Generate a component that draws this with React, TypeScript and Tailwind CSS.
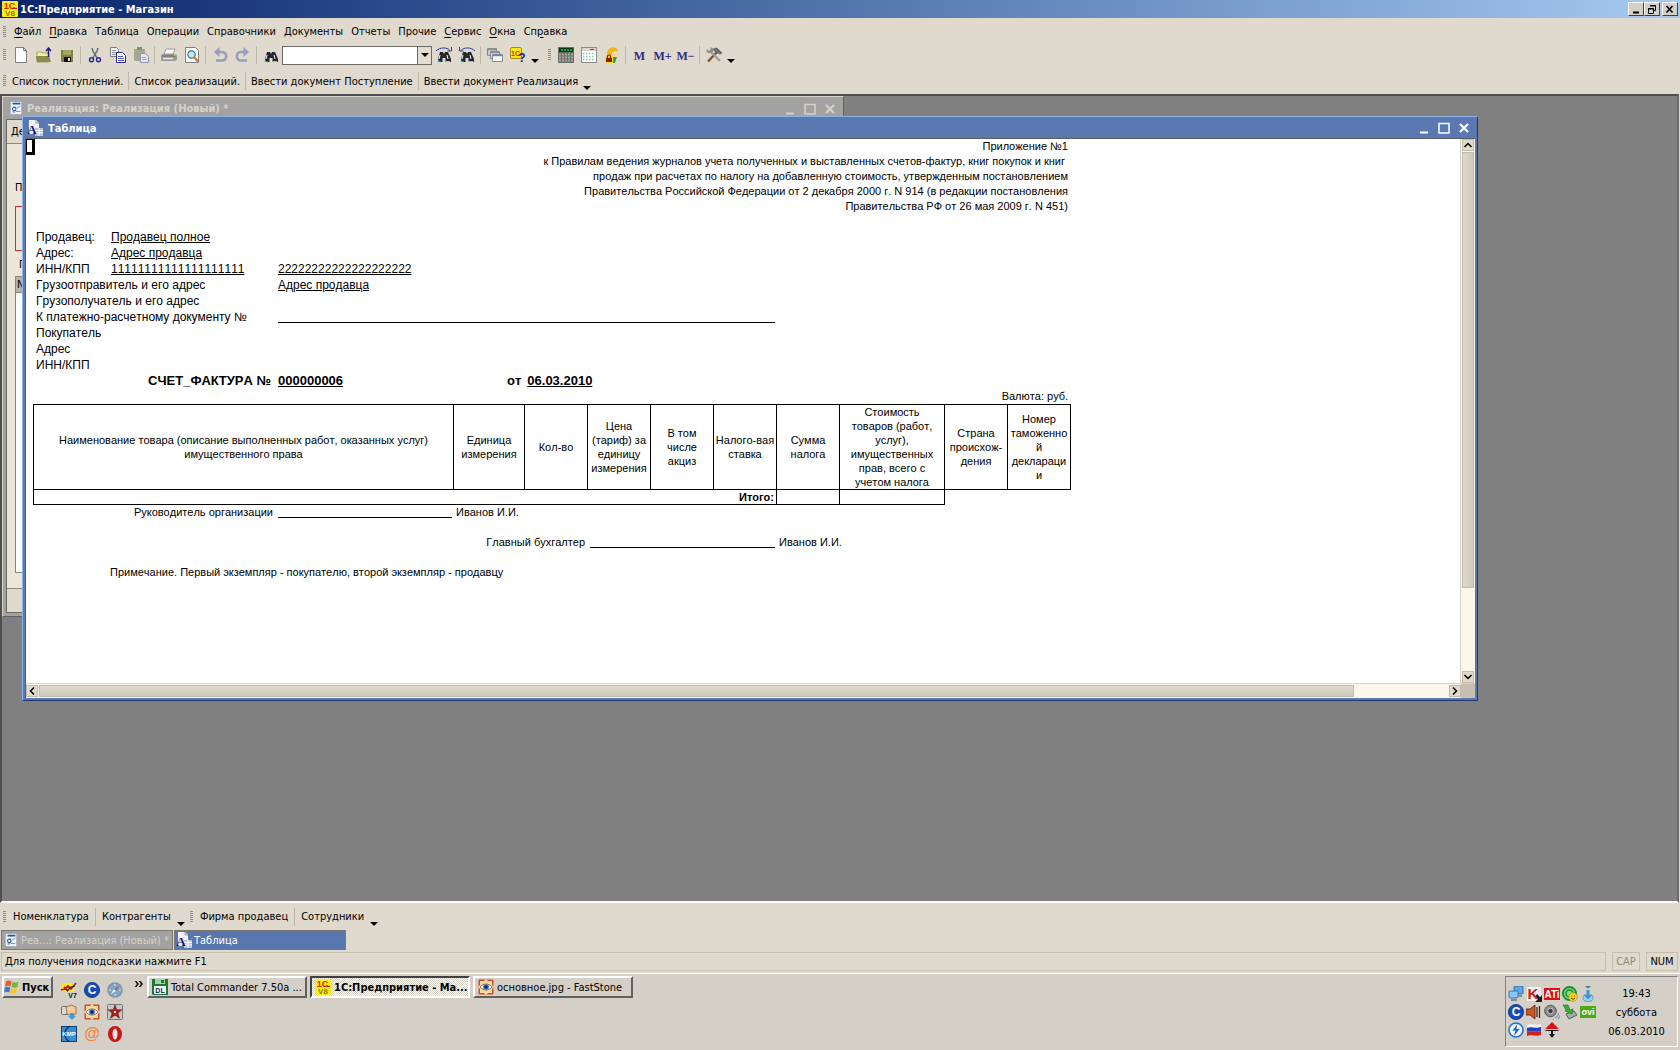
import type { ReactNode } from "react";

type Kids = { children?: ReactNode };

/* ---------- icons ---------- */

function Svg({ children }: Kids) {
  return (
    <svg viewBox="0 0 16 16" className="h-4 w-4 shrink-0" aria-hidden="true">
      {children}
    </svg>
  );
}

const glyphSans = "'Liberation Sans', Arial, sans-serif";
const glyphSerif = "'Liberation Serif', serif";

function Mark({ x, y, size, fill, serif, children }: Kids & { x: number; y: number; size: number; fill: string; serif?: boolean }) {
  return (
    <text x={x} y={y} fontSize={size} fontWeight="bold" textAnchor="middle" fill={fill} fontFamily={serif ? glyphSerif : glyphSans}>
      {children}
    </text>
  );
}

const Logo1C = () => (
  <Svg>
    <rect width="16" height="16" rx="1" fill="#ffee10" />
    <Mark x={7.5} y={8} size={9} fill="#d8200c">1С</Mark>
    <path d="M9 7.400h6" stroke="#d8200c" strokeWidth="1.200" />
    <Mark x={8} y={15.3} size={8} fill="#8a7a00">V8</Mark>
  </Svg>
);
const NewIcon = () => (
  <Svg>
    <path d="M2.5.5h8l3 3v12h-11z" fill="#fff" stroke="#808080" />
    <path d="M10.5.5v3h3" fill="none" stroke="#808080" />
  </Svg>
);
const OpenIcon = () => (
  <Svg>
    <path d="M1 5h5l1 1h6v9H1z" fill="#f4f0a8" stroke="#a8a460" />
    <path d="M0 9h13l2 6H1z" fill="#8c8c4a" />
    <path d="M12.5 10V2M10 4l2.500-3L15 4" fill="none" stroke="#20207c" strokeWidth="1.500" />
  </Svg>
);
const SaveIcon = () => (
  <Svg>
    <path d="M2 3h12v12H3l-1-1z" fill="#7f7f3e" />
    <path d="M4 3h8v5H4z" fill="#a4a464" />
    <path d="M5 10h7v5H5z" fill="#111" />
    <path d="M9 11h2v3H9z" fill="#ddd" />
  </Svg>
);
const CutIcon = () => (
  <Svg>
    <path d="M5 1l1 3 4 7M11 1l-1 3-4 7" fill="none" stroke="#666c74" strokeWidth="1.500" />
    <circle cx="4.500" cy="12.800" r="2" fill="none" stroke="#28288c" strokeWidth="1.400" />
    <circle cx="11.500" cy="12.800" r="2" fill="none" stroke="#28288c" strokeWidth="1.400" />
  </Svg>
);
const CopyIcon = () => (
  <Svg>
    <path d="M.5.5h6l2 2v7h-8z" fill="#eef" stroke="#808080" />
    <path d="M2 3.500h4M2 5.500h5M2 7.500h5" stroke="#909090" />
    <path d="M6.500 5.500h6l3 3v7h-9z" fill="#fff" stroke="#28288c" />
    <path d="M8 9.500h5M8 11.500h6M8 13.500h6" stroke="#5050a0" />
  </Svg>
);
const PasteIcon = () => (
  <Svg>
    <rect x="1" y="2" width="11" height="12" rx="1" fill="#a6a68c" />
    <rect x="4" y="0" width="5" height="3" fill="#8a8a80" />
    <path d="M7.500 6.500h5l3 3v6h-8z" fill="#e8e8ec" stroke="#9090a8" />
    <path d="M9 10.500h4M9 12.500h5" stroke="#a0a0b4" />
  </Svg>
);
const PrintIcon = () => (
  <Svg>
    <path d="M5 2h9l-2 5H3z" fill="#fafafa" stroke="#999" />
    <path d="M1 7h14l1 2v4l-2 1H1l-1-1V9z" fill="#9a9a98" />
    <path d="M1 9h14" stroke="#666" />
    <path d="M2 11.500h10" stroke="#e8e8e8" strokeWidth="1.500" />
    <path d="M13 8h2" stroke="#dd3" />
  </Svg>
);
const PreviewIcon = () => (
  <Svg>
    <path d="M1.500.5h10l3 3v12h-13z" fill="#fff" stroke="#808080" />
    <circle cx="7.500" cy="7.500" r="3.700" fill="#b8ecf4" stroke="#506878" strokeWidth="1.200" />
    <path d="M10 10l4 4.500" stroke="#c07820" strokeWidth="2" />
  </Svg>
);
const UndoIcon = () => (
  <Svg>
    <path d="M6 5h4a3.500 3.500 0 0 1 0 8.500H4" fill="none" stroke="#9c9cb8" strokeWidth="2.600" />
    <path d="M7.500 0v10L2 5z" fill="#9c9cb8" />
  </Svg>
);
const RedoIcon = () => (
  <Svg>
    <path d="M10 5H6a3.500 3.500 0 0 0 0 8.500H12" fill="none" stroke="#9c9cb8" strokeWidth="2.600" />
    <path d="M8.500 0v10L14 5z" fill="#9c9cb8" />
  </Svg>
);
const Bino = () => (
  <>
    <path d="M4 5h3l1 2 1-2h3l3 7v3H9.500v-4h-3v4H2v-3z" fill="#24282c" />
    <path d="M4 8l-1 4M11 8l1 4" stroke="#fff" />
    <path d="M2 13v2h3M9.500 14.500H14" stroke="#7fd8d8" fill="none" />
  </>
);
const FindIcon = () => <Svg><Bino /></Svg>;
const FindNextIcon = () => (
  <Svg>
    <Bino />
    <path d="M0 4C4 0 11 0 14 3.500M15.500 0v4h-4" fill="none" stroke="#34349c" />
  </Svg>
);
const FindPrevIcon = () => (
  <Svg>
    <Bino />
    <path d="M16 4C12 0 5 0 2 3.500M.5 0v4h4" fill="none" stroke="#34349c" />
  </Svg>
);
const WindowsIcon = () => (
  <Svg>
    <path d="M.5 1.500h9v7h-9z" fill="#ccc" stroke="#888" />
    <path d="M3.500 4.500h9v7h-9z" fill="#ddd" stroke="#888" />
    <path d="M5.500 7.500h10v7h-10z" fill="#f8fcff" stroke="#808890" />
    <path d="M1 2.500h8M4 5.500h8" stroke="#909498" strokeWidth="1.500" />
    <path d="M6 8.500h9" stroke="#6d8da8" strokeWidth="1.500" />
  </Svg>
);
const HelpIcon = () => (
  <Svg>
    <rect x=".5" y=".5" width="11" height="11" rx="1.500" fill="#ffe818" stroke="#a88c10" />
    <Mark x={5.500} y={8.500} size={7} fill="#cc3010">1С</Mark>
    <Mark x={12} y={15} size={12} fill="#20207c">?</Mark>
  </Svg>
);
const CalcIcon = () => (
  <Svg>
    <rect x="0" y="0" width="16" height="16" fill="#6c6c68" />
    <rect x="1" y="1" width="14" height="4" fill="#083c18" />
    <path d="M3 3h11" stroke="#20c850" strokeWidth="1.500" strokeDasharray="2 1" />
    <path d="M1 7.500h14M1 10.500h14M1 13.500h14" stroke="#a8a8a0" strokeWidth="2" strokeDasharray="2 1" />
  </Svg>
);
const CalendarIcon = () => (
  <Svg>
    <rect x=".5" y=".5" width="15" height="15" fill="#fff" stroke="#8c8c88" />
    <path d="M1 2.500h14" stroke="#d8d4cc" strokeWidth="3" />
    <path d="M9 2.500h4" stroke="#d03020" />
    <path d="M2 6.500h12M2 9.500h12M2 12.500h12" stroke="#84c8b8" strokeWidth="1.500" strokeDasharray="1.500 1.500" />
  </Svg>
);
const UserIcon = () => (
  <Svg>
    <path d="M3 8C2-1 13-2 14 4l-2 1-4 4z" fill="#f4b41c" />
    <path d="M8 5l4-1 2 3-1 3H8z" fill="#f8d8a4" />
    <path d="M9 10h4l-2 6H8z" fill="#3c9c58" />
    <rect x="1" y="8" width="8" height="8" fill="#f8dc28" />
    <path d="M2 11h6v4H2z" fill="#8c1c10" />
    <path d="M3.500 11V9.500a1.500 1.500 0 0 1 3 0V11" fill="none" stroke="#8c1c10" strokeWidth="1.200" />
  </Svg>
);
const ToolsIcon = () => (
  <Svg>
    <path d="M2 14.500 11 5" stroke="#8c4c28" strokeWidth="2.400" />
    <path d="M7 2l4-1 5 5-2 1-2-1-2 0z" fill="#70706c" stroke="#484844" strokeWidth=".6" />
    <path d="M4.500 4.500 14 14" stroke="#a0a09c" strokeWidth="2.400" />
    <path d="M1 2l2 2 2-2-1-1.500c3 0 4 2 3 4S2 7 .5 4.500z" fill="#8c8c88" />
  </Svg>
);
const FormIcon = () => (
  <svg viewBox="0 0 16 16" className="h-[14px] w-[14px] shrink-0" aria-hidden="true">
    <path d="M2 1h12v14H2z" fill="#eef4fc" />
    <path d="M4 3h9" stroke="#1c58a8" strokeWidth="2" />
    <circle cx="6" cy="9" r="2" fill="none" stroke="#28609c" strokeWidth="1.200" />
    <path d="M9 8l4-2M8 12h5" stroke="#6090c0" />
    <path d="M4 12.500h3" stroke="#28609c" />
  </svg>
);
const SheetIcon = () => (
  <Svg>
    <path d="M2 0h7l3 3v11H2z" fill="#f2f2fa" />
    <path d="M9 0v3h3" fill="none" stroke="#99a" />
    <path d="M8 8h8v8H8z" fill="#bcc4d0" />
    <path d="M8 10.500h8M8 13h8M12 8v8" stroke="#fff" />
    <Mark x={5} y={14} size={13} fill="#14147c" serif>A</Mark>
  </Svg>
);
const WindowsFlag = () => (
  <Svg>
    <path d="M2 2.500C4 1 5.500 1.500 7.500 2.500L6.500 7.500C4.500 6.500 3 6.500 1 7.800z" fill="#f0582c" />
    <path d="M8.500 3c2 1 3.500 1 6-.2L13.300 8c-2 1-3.800 1-5.800 0z" fill="#70b83c" />
    <path d="M.8 8.800c2-1.300 3.500-1.200 5.500-.2L5.300 13.500c-2-1-3.500-1-5.300.2z" fill="#3c78d8" />
    <path d="M7.300 9c2 1 3.800 1 5.800 0l-1.200 5c-2 1-3.800 1-5.800 0z" fill="#f8c820" />
  </Svg>
);
const V7Icon = () => (
  <Svg>
    <path d="M1 1l13 0-1 9H0z" fill="#ffe818" />
    <path d="M0 8l4-1 3-3 3 3 5-6M3 5l4 4" fill="none" stroke="#c01818" strokeWidth="1.800" />
    <path d="M6 9l4-4 4-1" fill="none" stroke="#20207c" strokeWidth="1.200" />
    <Mark x={11.500} y={15.500} size={7} fill="#111">V7</Mark>
  </Svg>
);
const BlueC = () => (
  <Svg>
    <circle cx="8" cy="8" r="7.600" fill="#184cb4" stroke="#0c2c7c" strokeWidth=".8" />
    <Mark x={8} y={12.300} size={12} fill="#fff">C</Mark>
  </Svg>
);
const SafariIcon = () => (
  <Svg>
    <circle cx="8" cy="8" r="7" fill="#78a8d0" stroke="#8c9298" strokeWidth="1.600" />
    <path d="M8 2v2M8 12v2M2 8h2M12 8h2" stroke="#dfeefa" />
    <path d="M12 4 9 9 7 7z" fill="#c05048" />
    <path d="M4 12l3-5 2 2z" fill="#f4f8fc" />
  </Svg>
);
const HandIcon = () => (
  <Svg>
    <rect x=".5" y="2.500" width="7" height="8" rx="1" fill="#d8dcd0" stroke="#607078" />
    <path d="M5 3l5-2 5 2v7l-4 2-5-2z" fill="#f4c898" stroke="#8c6040" strokeWidth=".8" />
    <path d="M9 9h4v3h2l-4 4-4-4h2z" fill="#38a0e0" />
  </Svg>
);
const EyeIcon = () => (
  <Svg>
    <rect x=".5" y=".5" width="15" height="15" rx="1" fill="#d04c24" />
    <path d="M8 0l2 2h4v4l2 2-2 2v4h-4l-2 2-2-2H2v-4L0 8l2-2V2h4z" fill="#f4d8a8" />
    <path d="M2 8c3-4 9-4 12 0-3 4-9 4-12 0z" fill="#e8f0f8" stroke="#8c5430" strokeWidth=".8" />
    <circle cx="8" cy="8" r="2.800" fill="#2c68b0" />
    <circle cx="8" cy="8" r="1.300" fill="#081c40" />
  </Svg>
);
const StarIcon = () => (
  <Svg>
    <rect x=".5" y=".5" width="15" height="15" rx="1" fill="#c8c8c4" stroke="#787874" />
    <path d="M8 1l1.800 4.800H15l-4 3.200 1.500 5.200L8 11.200 3.500 14.200 5 9 1 5.800h5.200z" fill="#a81c1c" stroke="#681010" strokeWidth=".5" />
    <circle cx="8" cy="8" r="1.300" fill="#e8d8d0" />
  </Svg>
);
const KmpIcon = () => (
  <Svg>
    <rect x=".5" y=".5" width="15" height="15" fill="#3c8cd0" stroke="#103c70" />
    <path d="M9 0C2 4 2 12 9 16" fill="none" stroke="#0c2c58" strokeWidth="1.300" />
    <Mark x={8} y={10} size={6} fill="#fff">KMP</Mark>
  </Svg>
);
const AtIcon = () => (
  <Svg>
    <Mark x={8} y={13} size={16} fill="#f08838">@</Mark>
  </Svg>
);
const OperaIcon = () => (
  <Svg>
    <ellipse cx="8" cy="8" rx="7" ry="8" fill="#cc1418" />
    <ellipse cx="8" cy="8" rx="2.500" ry="5.500" fill="#e8e4e0" />
  </Svg>
);
const FloppyIcon = () => (
  <Svg>
    <path d="M0 0h16v16H1l-1-1z" fill="#187c30" />
    <path d="M3 0h10v5H3z" fill="#a4d0a8" />
    <path d="M9 1h3v3H9z" fill="#187c30" />
    <path d="M2 7h12v8H2z" fill="#f4f4f4" />
    <Mark x={8} y={13.500} size={7} fill="#202860">DL</Mark>
  </Svg>
);
const NetIcon = () => (
  <Svg>
    <rect x="6" y="0" width="9" height="8" rx="1" fill="#58a8ec" stroke="#2c5c9c" strokeWidth=".8" />
    <rect x="1" y="5" width="9" height="7" rx="1" fill="#88c8f8" stroke="#2c5c9c" strokeWidth=".8" />
    <path d="M3 14h6M10 10h4" stroke="#7c90a4" strokeWidth="1.800" />
  </Svg>
);
const KasperIcon = () => (
  <Svg>
    <rect x="1" y="1" width="14" height="14" fill="#f4f0ec" />
    <Mark x={7} y={13} size={15} fill="#d01c18">K</Mark>
    <path d="M9 16h7V9l-2 2-3-3-1.500 2 2.500 3z" fill="#181c24" />
  </Svg>
);
const AtiIcon = () => (
  <Svg>
    <rect y="2" width="16" height="12" fill="#dc1010" />
    <Mark x={8} y={12} size={10} fill="#fff">ATi</Mark>
  </Svg>
);
const SmileIcon = () => (
  <Svg>
    <circle cx="7.500" cy="7.500" r="6.500" fill="#8cdc78" stroke="#18902c" strokeWidth="2" />
    <circle cx="7.500" cy="7.500" r="3.500" fill="none" stroke="#18902c" strokeWidth="1.500" />
    <circle cx="11" cy="11" r="4.300" fill="#fcd428" stroke="#b88c10" strokeWidth=".7" />
    <path d="M9 12c1 1.500 3 1.500 4 0M9.500 10h.8M12 10h.8" fill="none" stroke="#604008" />
  </Svg>
);
const DownloadIcon = () => (
  <Svg>
    <path d="M5 0h6L9 2H7z" fill="#58788c" />
    <path d="M4 9c-2 4-1 6.500 4 6.500s6-2.500 4-6.500z" fill="#9cd4f0" stroke="#4890b8" strokeWidth=".8" />
    <path d="M6.500 4h3v5h3L8 13.500 3.500 9h3z" fill="#3898d8" />
  </Svg>
);
const HornIcon = () => (
  <Svg>
    <path d="M0 5h4l5-4v14l-5-4H0z" fill="#c85828" stroke="#501c08" strokeWidth=".8" />
    <path d="M11 3v10M13.500 2v12" fill="none" stroke="#401408" strokeWidth="1.200" />
  </Svg>
);
const SpeakerIcon = () => (
  <Svg>
    <circle cx="6.500" cy="7" r="5.800" fill="#8c8c8c" stroke="#545454" />
    <circle cx="6.500" cy="7" r="2.800" fill="#404040" stroke="#c8c8c8" />
    <path d="M11 14c2-1 3.500-3 3.500-5M9 15.500h1M14 15c1-1 2-2 2-4" fill="none" stroke="#8890e0" strokeWidth="1.200" />
  </Svg>
);
const UsbIcon = () => (
  <Svg>
    <path d="M4 10l8-3 3 4-8 4z" fill="#a8aca8" stroke="#585c58" />
    <path d="M1 1h5l2 5 3-1-1 5-7-3 1-1z" fill="#38b038" stroke="#187018" strokeWidth=".6" />
  </Svg>
);
const OviIcon = () => (
  <Svg>
    <rect y="2" width="16" height="12" fill="#50a818" />
    <Mark x={8} y={11} size={9} fill="#fff">ovi</Mark>
  </Svg>
);
const BoltIcon = () => (
  <Svg>
    <circle cx="8" cy="8" r="7" fill="#eaf4fc" stroke="#2474c4" strokeWidth="1.600" />
    <path d="M9.500 2 4.500 8.500h3L6 14l5.500-7H8.300z" fill="#1c64b8" />
  </Svg>
);
const FlagRuIcon = () => (
  <Svg>
    <path d="M1 3c4-2 9 1 14-1v4c-5 2-10-1-14 1z" fill="#f4f4f8" />
    <path d="M1 6c4-2 9 1 14-1v4c-5 2-10-1-14 1z" fill="#2840b8" />
    <path d="M1 10c4-2 9 1 14-1v4c-5 2-10-1-14 1z" fill="#d02020" />
  </Svg>
);
const ArrowsIcon = () => (
  <Svg>
    <path d="M8 0l7 7H1z" fill="#d81414" />
    <path d="M0 8h16l-3 1H9v3h2l-3 4-3-4h2V9H3z" fill="#14181c" />
  </Svg>
);

/* ---------- bars ---------- */

const Grip = () => (
  <span className="mx-[3px] h-3 w-[3px] shrink-0 bg-[repeating-linear-gradient(to_bottom,#8f8a80_0_1px,transparent_1px_2px)]" />
);
const Sep = () => (
  <span className="flex w-[5px] shrink-0 justify-center">
    <span className="h-[18px] w-px bg-[#bdb5a6]" />
  </span>
);
const More = () => (
  <button aria-label="Ещё" className="flex h-full w-3 shrink-0 items-end justify-center pb-1">
    <span className="border-x-4 border-t-4 border-x-transparent border-t-black" />
  </button>
);
function Tool({ label, children }: Kids & { label: string }) {
  return (
    <button aria-label={label} className="flex h-full w-[23px] shrink-0 items-center justify-center">
      {children}
    </button>
  );
}
function Mem({ children }: Kids) {
  return (
    <button className="w-[23px] shrink-0 whitespace-nowrap pt-[2px] text-center text-[12px] font-bold text-[#2c2c84] [font-family:'Liberation_Serif',serif]">
      {children}
    </button>
  );
}
function TextTool({ children }: Kids) {
  return <button className="h-full shrink-0 px-[3px] pt-[2px] whitespace-nowrap">{children}</button>;
}
function PanelTool({ children }: Kids) {
  return <button className="h-full shrink-0 px-1 whitespace-nowrap">{children}</button>;
}

const menu: [string, string, string][] = [
  ["", "Ф", "айл"],
  ["", "П", "равка"],
  ["Таблица", "", ""],
  ["Операции", "", ""],
  ["Справочники", "", ""],
  ["Документы", "", ""],
  ["Отчеты", "", ""],
  ["Прочие", "", ""],
  ["", "С", "ервис"],
  ["", "О", "кна"],
  ["Сп", "р", "авка"],
];

function CaptionButton({ label, children }: Kids & { label: string }) {
  return (
    <button
      aria-label={label}
      className="flex h-[14px] w-4 items-center justify-center border border-t-white border-r-[#404040] border-b-[#404040] border-l-white bg-[#d4d0c8]"
    >
      <svg viewBox="0 0 12 11" className="h-[11px] w-3" fill="none" stroke="#000">{children}</svg>
    </button>
  );
}

function TitleBar() {
  return (
    <header className="flex h-[18px] shrink-0 items-center bg-linear-to-r from-[#0a246a] to-[#a6caf0] px-[2px] font-bold text-white">
      <Logo1C />
      <h1 className="ml-[2px] flex-1 pt-px">1С:Предприятие - Магазин</h1>
      <CaptionButton label="Свернуть"><path d="M3 8.500h6" strokeWidth="2" /></CaptionButton>
      <CaptionButton label="Восстановить">
        <path d="M4.500 2v-.5h5v5H8M4 2h6M2.500 4.500h5v5h-5zM2 5h6" />
      </CaptionButton>
      <span className="w-[2px]" />
      <CaptionButton label="Закрыть"><path d="M2.500 2l6 6.500M8.500 2l-6 6.500" strokeWidth="1.700" /></CaptionButton>
    </header>
  );
}

function Menu() {
  return (
    <nav className="flex h-[25px] shrink-0 items-center pt-[2px]">
      <Grip />
      <span className="w-px" />
      {menu.map(([pre, key, post]) => (
        <button key={pre + key + post} className="px-1 whitespace-nowrap">
          {pre}
          {key && <u className="underline-offset-2">{key}</u>}
          {post}
        </button>
      ))}
    </nav>
  );
}

function Toolbar() {
  return (
    <div className="flex h-6 shrink-0 items-center">
      <Grip />
      <div className="flex h-full items-center">
        <Tool label="Новый"><NewIcon /></Tool>
        <Tool label="Открыть"><OpenIcon /></Tool>
        <Tool label="Сохранить"><SaveIcon /></Tool>
        <Sep />
        <Tool label="Вырезать"><CutIcon /></Tool>
        <Tool label="Копировать"><CopyIcon /></Tool>
        <Tool label="Вставить"><PasteIcon /></Tool>
        <Sep />
        <Tool label="Печать"><PrintIcon /></Tool>
        <Tool label="Просмотр"><PreviewIcon /></Tool>
        <Sep />
        <Tool label="Отменить"><UndoIcon /></Tool>
        <Tool label="Вернуть"><RedoIcon /></Tool>
        <Sep />
        <Tool label="Найти"><FindIcon /></Tool>
        <div className="flex h-[19px] w-[150px] shrink-0 border border-[#6f6b64] bg-white">
          <input aria-label="Поиск" className="min-w-0 flex-1 px-1 outline-none" />
          <button aria-label="Список" className="flex w-[14px] items-center justify-center border-l border-[#6f6b64] bg-[#e4ddd0]">
            <span className="border-x-4 border-t-4 border-x-transparent border-t-black" />
          </button>
        </div>
        <Tool label="Найти следующий"><FindNextIcon /></Tool>
        <Tool label="Найти предыдущий"><FindPrevIcon /></Tool>
        <Sep />
        <Tool label="Окна"><WindowsIcon /></Tool>
        <Tool label="Помощь"><HelpIcon /></Tool>
        <More />
      </div>
      <span className="w-1" />
      <Grip />
      <div className="flex h-full items-center">
        <Tool label="Калькулятор"><CalcIcon /></Tool>
        <Tool label="Календарь"><CalendarIcon /></Tool>
        <Tool label="Пользователь"><UserIcon /></Tool>
        <Sep />
        <Mem>M</Mem>
        <Mem>M+</Mem>
        <Mem>M−</Mem>
        <Sep />
        <Tool label="Настройка"><ToolsIcon /></Tool>
        <More />
      </div>
    </div>
  );
}

/* ---------- MDI windows ---------- */

function MdiButtons() {
  return (
    <div className="flex items-center pt-px">
      <button aria-label="Свернуть" className="flex h-5 w-5 items-center justify-center">
        <svg viewBox="0 0 12 12" className="h-3 w-3"><path d="M2 10.500h8" stroke="currentColor" strokeWidth="2" /></svg>
      </button>
      <button aria-label="Развернуть" className="flex h-5 w-5 items-center justify-center">
        <svg viewBox="0 0 12 12" className="h-3 w-3"><path d="M1 1.500h10v9.500H1z" fill="none" stroke="currentColor" strokeWidth="1.500" /></svg>
      </button>
      <button aria-label="Закрыть" className="flex h-5 w-5 items-center justify-center">
        <svg viewBox="0 0 12 12" className="h-3 w-3"><path d="M2 2l8 8M10 2l-8 8" stroke="currentColor" strokeWidth="2.200" /></svg>
      </button>
    </div>
  );
}

function BackWindow() {
  return (
    <section className="absolute top-0 left-0 flex h-[521px] w-[842px] flex-col border border-[#d8d4cc] border-r-[#606060] border-b-[#606060] bg-[#a2a2a2] p-[3px] pt-0">
      <div className="flex h-[22px] shrink-0 items-center pl-[3px] font-bold text-[#d6d2ca]">
        <FormIcon />
        <h2 className="ml-1 flex-1 pt-[2px]">Реализация: Реализация (Новый) *</h2>
        <MdiButtons />
      </div>
      <div className="flex flex-1 flex-col border border-[#6c6860] bg-[#ece5da]">
        <div className="h-6 border-b border-[#8c8678] bg-[#e0d9cd] pl-1 leading-6">Де</div>
        <div className="flex flex-1 flex-col px-2">
          <p className="mt-9 leading-4">П</p>
          <div className="mt-[10px] h-[45px] border border-[#d03030]" />
          <p className="mt-[6px] pl-1 leading-4">П</p>
          <div className="mt-[3px] flex-1 border border-[#8c8678] bg-white">
            <div className="h-4 border-b border-[#8c8678] bg-[#b8b2a6] pl-px leading-4">N</div>
          </div>
        </div>
        <div className="mt-[15px] h-6 border-t border-[#8c8678] bg-[#e0d9cd]" />
      </div>
    </section>
  );
}

function ScrollButton({ label, d }: { label: string; d: string }) {
  return (
    <button aria-label={label} className="flex h-3 w-3 shrink-0 items-center justify-center border border-[#c2baa9] bg-[#dfd9ce]">
      <svg viewBox="0 0 10 10" className="h-[10px] w-[10px] shrink-0"><path d={d} fill="none" stroke="#000" strokeWidth="1.500" /></svg>
    </button>
  );
}

const columns: [number, string][] = [
  [420, "Наименование товара (описание выполненных работ, оказанных услуг)\nимущественного права"],
  [71, "Единица\nизмерения"],
  [63, "Кол-во"],
  [63, "Цена\n(тариф) за\nединицу\nизмерения"],
  [63, "В том\nчисле\nакциз"],
  [63, "Налого-вая\nставка"],
  [63, "Сумма\nналога"],
  [105, "Стоимость\nтоваров (работ,\nуслуг),\nимущественных\nправ, всего с\nучетом налога"],
  [63, "Страна\nпроисхож-\nдения"],
  [63, "Номер\nтаможенно\nй\nдеклараци\nи"],
];

function Pair({ a, b, c }: { a: string; b?: string; c?: ReactNode }) {
  return (
    <div className="flex h-4 whitespace-nowrap">
      <span className={b ? "w-[75px]" : "w-[242px]"}>{a}</span>
      {b && <span className="w-[167px] underline underline-offset-1">{b}</span>}
      {c}
    </div>
  );
}

function Invoice() {
  return (
    <article className="ml-[7px] w-[1038px] text-[11px] leading-[15px] text-black [font-family:'Liberation_Sans',Arial,sans-serif] [font-kerning:none]">
      <p className="pr-[3px] text-right whitespace-pre">
        {"Приложение №1\nк Правилам ведения журналов учета полученных и выставленных счетов-фактур, книг покупок и книг \nпродаж при расчетах по налогу на добавленную стоимость, утвержденным постановлением\nПравительства Российской Федерации от 2 декабря 2000 г. N 914 (в редакции постановления\nПравительства РФ от 26 мая 2009 г. N 451)"}
      </p>
      <div className="mt-[15px] pl-[3px] text-[12px] leading-4">
        <Pair a="Продавец:" b="Продавец полное" />
        <Pair a="Адрес:" b="Адрес продавца" />
        <Pair a="ИНН/КПП" b="11111111111111111111" c={<span className="underline underline-offset-1">22222222222222222222</span>} />
        <Pair a="Грузоотправитель и его адрес" c={<span className="underline underline-offset-1">Адрес продавца</span>} />
        <Pair a="Грузополучатель и его адрес" />
        <Pair a="К платежно-расчетному документу №" c={<span className="mb-[2px] w-[497px] border-b border-black" />} />
        <Pair a="Покупатель" />
        <Pair a="Адрес" />
        <Pair a="ИНН/КПП" />
      </div>
      <h3 className="flex h-4 text-[13px] leading-4 font-bold">
        <span className="w-[238px] text-right">СЧЕТ_ФАКТУРА №</span>
        <span className="ml-[7px] underline underline-offset-1">000000006</span>
        <span className="ml-auto flex w-[564px] gap-[6px]">
          <span>от</span>
          <span className="underline underline-offset-1">06.03.2010</span>
        </span>
      </h3>
      <p className="pr-[3px] text-right">Валюта: руб.</p>
      <table className="w-full table-fixed border-collapse">
        <colgroup>
          {columns.map(([w], i) => (
            <col key={i} style={{ width: w }} />
          ))}
        </colgroup>
        <thead>
          <tr>
            {columns.map(([, t]) => (
              <th key={t} scope="col" className="h-[85px] border border-black p-0 text-center leading-[14px] font-normal whitespace-pre">
                {t}
              </th>
            ))}
          </tr>
        </thead>
        <tbody>
          <tr>
            <th colSpan={6} scope="row" className="h-[15px] border border-black p-0 pr-[2px] text-right leading-[14px] font-bold">
              Итого:
            </th>
            <td className="border border-black p-0" />
            <td className="border border-black p-0" />
          </tr>
        </tbody>
      </table>
      <div className="flex h-[15px]">
        <span className="w-[240px] text-right">Руководитель организации</span>
        <span className="mr-1 mb-[2px] ml-[5px] w-[174px] border-b border-black" />
        <span>Иванов И.И.</span>
      </div>
      <div className="mt-[15px] flex h-[15px]">
        <span className="w-[552px] text-right">Главный бухгалтер</span>
        <span className="mr-1 mb-[2px] ml-[5px] w-[185px] border-b border-black" />
        <span>Иванов И.И.</span>
      </div>
      <p className="mt-[15px] pl-[77px]">Примечание. Первый экземпляр - покупателю, второй экземпляр - продавцу</p>
    </article>
  );
}

function FrontWindow() {
  return (
    <section className="absolute top-5 left-5 flex h-[585px] w-[1456px] flex-col border border-t-[#8fb2e6] border-r-[#1f3a70] border-b-[#1f3a70] border-l-[#8fb2e6] bg-[#5b79b0] px-[2px] pb-[2px]">
      <div className="flex h-[21px] shrink-0 items-center pr-px pl-[2px] font-bold text-white">
        <SheetIcon />
        <h2 className="ml-[5px] flex-1 pt-[2px]">Таблица</h2>
        <MdiButtons />
      </div>
      <div className="flex min-h-0 flex-1 flex-col border border-r-0 border-b-0 border-[#5a5e68] bg-white">
        <div className="flex min-h-0 flex-1">
          <div className="relative min-w-0 flex-1 overflow-hidden">
            <span className="absolute top-0 left-0 h-4 w-[9px] border border-r-[3px] border-b-[3px] border-black" />
            <Invoice />
          </div>
          <div className="flex w-[15px] shrink-0 flex-col items-center border-l border-[#d8d2c4] bg-[#fdf6ea]">
            <ScrollButton label="Вверх" d="M1.500 7 5 3.500 8.500 7" />
            <div className="mt-px h-[436px] w-3 border border-[#c2baa9] bg-linear-to-r from-[#dfd9ce] to-[#d0cabc]" />
            <span className="flex-1" />
            <ScrollButton label="Вниз" d="M1.500 3 5 6.500 8.500 3" />
          </div>
        </div>
        <div className="flex h-[15px] shrink-0 border-t border-[#d8d2c4] bg-[#fdf6ea]">
          <div className="flex flex-1 items-center">
            <ScrollButton label="Влево" d="M7 1.500 3.500 5 7 8.500" />
            <div className="ml-px h-3 w-[1315px] border border-[#c2baa9] bg-linear-to-b from-[#dfd9ce] to-[#d0cabc]" />
            <span className="flex-1" />
            <ScrollButton label="Вправо" d="M3 1.500 6.500 5 3 8.500" />
          </div>
          <span className="w-[14px] bg-[#c6bfb2]" />
        </div>
      </div>
    </section>
  );
}

/* ---------- taskbar ---------- */

function Task({ icon, active, children }: Kids & { icon: ReactNode; active?: boolean }) {
  return (
    <button
      className={
        "flex h-[22px] w-[160px] items-center gap-[3px] overflow-hidden border-2 pl-[3px] whitespace-nowrap " +
        (active
          ? "border-t-[#404040] border-r-white border-b-white border-l-[#404040] bg-[repeating-conic-gradient(#fff_0_25%,#d4d0c8_0_50%)] bg-[length:2px_2px] font-bold"
          : "border-t-white border-r-[#606060] border-b-[#606060] border-l-white bg-[#d4d0c8]")
      }
    >
      {icon}
      <span className="pt-px">{children}</span>
    </button>
  );
}

function Taskbar() {
  return (
    <footer className="flex h-[77px] shrink-0 items-start border-t border-white bg-[#d4d0c8] px-[2px] pt-[2px]">
      <button className="flex h-[22px] w-[51px] items-center gap-[2px] border-2 border-t-white border-r-[#606060] border-b-[#606060] border-l-white font-bold">
        <WindowsFlag />
        <span className="pt-px">Пуск</span>
      </button>
      <div className="mt-[6px] ml-2 grid grid-cols-3 gap-x-[7px] gap-y-[6px]">
        <V7Icon /><BlueC /><SafariIcon />
        <HandIcon /><EyeIcon /><StarIcon />
        <KmpIcon /><AtIcon /><OperaIcon />
      </div>
      <button aria-label="Ещё значки" className="mt-1 ml-3 flex h-2 w-2 items-center">
        <svg viewBox="0 0 8 6" className="h-[6px] w-2"><path d="M.5 0 3 3 .5 6M4.500 0 7 3 4.500 6" fill="none" stroke="#000" strokeWidth="1.400" /></svg>
      </button>
      <div className="ml-1 flex flex-1 gap-[3px]">
        <Task icon={<FloppyIcon />}>Total Commander 7.50a ...</Task>
        <Task icon={<Logo1C />} active>1С:Предприятие - Ма...</Task>
        <Task icon={<EyeIcon />}>основное.jpg - FastStone</Task>
      </div>
      <div className="flex h-[71px] w-[173px] border border-t-[#808080] border-r-white border-b-white border-l-[#808080]">
        <div className="mt-[9px] ml-[2px] grid h-min grid-cols-5 gap-[2px]">
          <NetIcon /><KasperIcon /><AtiIcon /><SmileIcon /><DownloadIcon />
          <BlueC /><HornIcon /><SpeakerIcon /><UsbIcon /><OviIcon />
          <BoltIcon /><FlagRuIcon /><ArrowsIcon />
        </div>
        <div className="mt-[7px] flex-1 text-center leading-[19px]">
          <p>19:43</p>
          <p>суббота</p>
          <p>06.03.2010</p>
        </div>
      </div>
    </footer>
  );
}

export default function App() {
  return (
    <div className="flex h-screen flex-col overflow-hidden bg-[#e0d9cd] text-[11px] leading-4 text-black [font-family:'DejaVu_Sans_Condensed','Noto_Sans',sans-serif]">
      <TitleBar />
      <Menu />
      <Toolbar />
      <div className="flex h-[27px] shrink-0 items-center">
        <Grip />
        <TextTool>Список поступлений.</TextTool>
        <Sep />
        <TextTool>Список реализаций.</TextTool>
        <Sep />
        <TextTool>Ввести документ Поступление</TextTool>
        <Sep />
        <TextTool>Ввести документ Реализация</TextTool>
        <More />
      </div>
      <main className="relative mr-px min-h-0 flex-1 overflow-hidden border-2 border-t-[#505050] border-r-[#6c6c6c] border-b-white border-l-[#505050] bg-[#808080]">
        <BackWindow />
        <FrontWindow />
      </main>
      <div className="flex h-[27px] shrink-0 items-center">
        <Grip />
        <PanelTool>Номенклатура</PanelTool>
        <Sep />
        <PanelTool>Контрагенты</PanelTool>
        <More />
        <Grip />
        <PanelTool>Фирма продавец</PanelTool>
        <Sep />
        <PanelTool>Сотрудники</PanelTool>
        <More />
      </div>
      <div className="flex h-[22px] shrink-0 gap-px pl-px">
        <button className="flex h-5 w-[172px] items-center gap-[3px] overflow-hidden border border-[#7c786f] bg-[#a2a2a2] pl-[2px] whitespace-nowrap text-[#d6d2ca]">
          <FormIcon />
          <span className="pt-px">Реа...: Реализация (Новый) *</span>
        </button>
        <button className="flex h-5 w-[172px] items-center gap-[2px] border border-[#7c786f] bg-[#5877ae] pl-px text-white">
          <SheetIcon />
          <span className="pt-px">Таблица</span>
        </button>
      </div>
      <div className="mb-[2px] flex h-[19px] shrink-0 gap-[6px] pr-[2px] pl-px">
        <div className="flex-1 border border-[#c6bfb0] pt-px pl-[3px]">Для получения подсказки нажмите F1</div>
        <div className="w-7 border border-[#c6bfb0] pt-px text-center text-[#8f8a80]">CAP</div>
        <div className="w-8 border border-[#c6bfb0] pt-px text-center">NUM</div>
      </div>
      <Taskbar />
    </div>
  );
}
